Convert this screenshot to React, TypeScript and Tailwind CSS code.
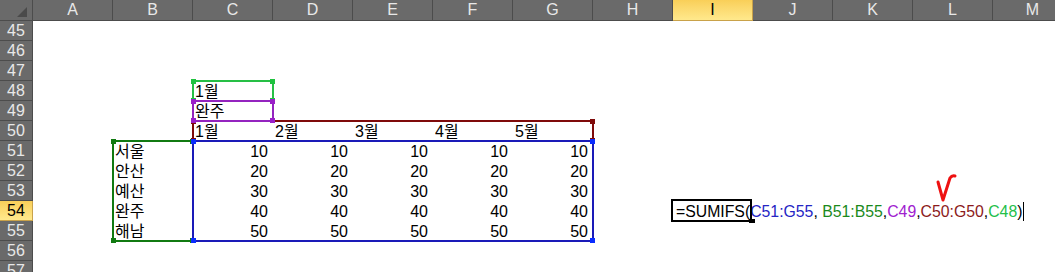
import React from 'react';

const COLS = ['A', 'B', 'C', 'D', 'E', 'F', 'G', 'H', 'I', 'J', 'K', 'L', 'M'];
const ROWS = [45, 46, 47, 48, 49, 50, 51, 52, 53, 54, 55, 56, 57];

type Cell = { t: string; r?: boolean };
const cells: Record<string, Cell> = {
  C48: { t: '1월' },
  C49: { t: '완주' },
  C50: { t: '1월' },
  D50: { t: '2월' },
  E50: { t: '3월' },
  F50: { t: '4월' },
  G50: { t: '5월' },
};
const cities = ['서울', '안산', '예산', '완주', '해남'];
cities.forEach((c, i) => {
  const row = 51 + i;
  cells[`B${row}`] = { t: c };
  ['C', 'D', 'E', 'F', 'G'].forEach((col) => {
    cells[`${col}${row}`] = { t: String((i + 1) * 10), r: true };
  });
});

type Box = { l: number; t: number; w: number; h: number; color: string; handle: string };

function RangeBox({ b }: { b: Box }) {
  const pts = [
    [b.l - 1, b.t - 1],
    [b.l + b.w - 4, b.t - 1],
    [b.l - 1, b.t + b.h - 4],
    [b.l + b.w - 4, b.t + b.h - 4],
  ];
  return (
    <>
      <div
        className="absolute border-2 pointer-events-none"
        style={{ left: b.l, top: b.t, width: b.w, height: b.h, borderColor: b.color }}
      />
      {pts.map(([x, y], i) => (
        <div
          key={i}
          className="absolute w-[5px] h-[5px]"
          style={{ left: x, top: y, backgroundColor: b.handle }}
        />
      ))}
    </>
  );
}

const boxes: Box[] = [
  { l: 112, t: 140, w: 82, h: 102, color: '#117a11', handle: '#117a11' },
  { l: 192, t: 120, w: 402, h: 22, color: '#7f0a0a', handle: '#7f0a0a' },
  { l: 192, t: 80, w: 82, h: 22, color: '#26bf45', handle: '#1fc23f' },
  { l: 192, t: 100, w: 82, h: 22, color: '#9424bf', handle: '#9a1fc9' },
  { l: 192, t: 140, w: 402, h: 102, color: '#1a1ab8', handle: '#0a2cff' },
];

function Formula() {
  return (
    <span className="whitespace-nowrap text-black text-[15.8px]">
      =SUMIFS(
      <span className="text-[#2626c4]">C51:G55</span>,{' '}
      <span className="text-[#1c8a1c]">B51:B55</span>,
      <span className="text-[#a021cf]">C49</span>,
      <span className="text-[#8c1b1b]">C50:G50</span>,
      <span className="text-[#24c04a]">C48</span>)
      <span className="inline-block w-[1px] h-[19px] bg-black align-[-4px] ml-[1px]" />
    </span>
  );
}

export default function App() {
  return (
    <div className="relative w-[1055px] h-[272px] overflow-hidden bg-white font-[Liberation_Sans,Noto_Sans_CJK_KR,sans-serif] text-[16px]">
      {/* column header */}
      <div className="flex h-[21px]">
        <div className="relative w-[33px] h-[21px] shrink-0 bg-[#6a6a6a] border-r border-b border-[#4c4c4c]">
          <div className="absolute right-[5px] bottom-[3px] w-0 h-0 border-l-[10px] border-l-transparent border-b-[10px] border-b-[#4a4a4a]" />
        </div>
        {COLS.map((c) =>
          c === 'I' ? (
            <div
              key={c}
              className="w-[80px] h-[21px] shrink-0 bg-linear-to-b from-[#f9cf58] to-[#ffe98c] border-r border-b border-[#c9a24a] text-center leading-[20px] text-black"
            >
              {c}
            </div>
          ) : (
            <div
              key={c}
              className="w-[80px] h-[21px] shrink-0 bg-[#6a6a6a] border-r border-b border-[#4c4c4c] text-center leading-[20px] text-[#e8e8e8]"
            >
              {c}
            </div>
          )
        )}
      </div>
      {/* rows */}
      {ROWS.map((r) => (
        <div key={r} className="flex h-[20px]">
          {r === 54 ? (
            <div className="w-[33px] h-[20px] shrink-0 bg-linear-to-b from-[#f9cf58] to-[#ffe98c] border-r border-b border-[#c9a24a] text-center leading-[20px] text-black">
              {r}
            </div>
          ) : (
            <div className="w-[33px] h-[20px] shrink-0 bg-[#6a6a6a] border-r border-b border-[#4c4c4c] text-center leading-[20px] text-[#e8e8e8]">
              {r}
            </div>
          )}
          {COLS.map((c) => {
            const key = `${c}${r}`;
            if (key === 'I54') {
              return (
                <div key={c} className="relative z-10 w-[80px] h-[20px] shrink-0 pt-[1px] pl-[3px] leading-[20px] overflow-visible">
                  <Formula />
                </div>
              );
            }
            const cell = cells[key];
            return (
              <div
                key={c}
                className={
                  cell && cell.r
                    ? 'w-[80px] h-[20px] shrink-0 pt-[1px] pr-[5px] text-right leading-[20px] text-black whitespace-nowrap'
                    : 'w-[80px] h-[20px] shrink-0 pt-[1px] pl-[2px] text-left leading-[20px] text-black whitespace-nowrap'
                }
              >
                {cell ? cell.t : ''}
              </div>
            );
          })}
        </div>
      ))}

      {/* range finder boxes */}
      {boxes.map((b, i) => (
        <RangeBox key={i} b={b} />
      ))}

      {/* active cell border */}
      <div className="absolute left-[671px] top-[199px] w-[81px] h-[23px] border-2 border-black z-20" />
      <div className="absolute left-[749px] top-[219px] w-[6px] h-[4px] bg-black z-20" />

      {/* red check mark */}
      <svg className="absolute left-[930px] top-[170px] z-30" width="30" height="35" viewBox="0 0 30 35">
        <path
          d="M8 12 L13 30 L20 8 Q22 5 25 6"
          fill="none"
          stroke="#ee1111"
          strokeWidth="3"
          strokeLinecap="round"
          strokeLinejoin="round"
        />
      </svg>
    </div>
  );
}
